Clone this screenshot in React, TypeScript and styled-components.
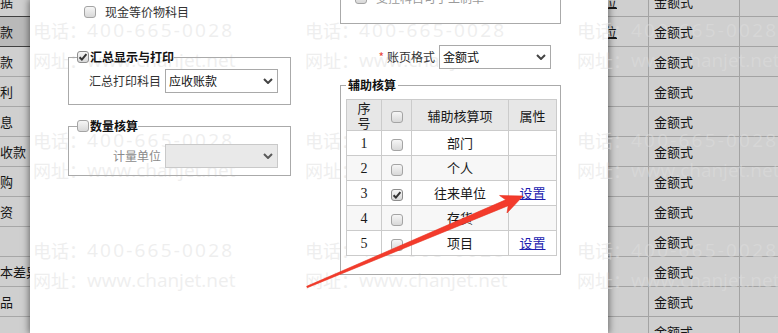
import React from "react";
import styled, { createGlobalStyle } from "styled-components";

const GlobalStyle = createGlobalStyle`
  html, body { margin: 0; padding: 0; background: #cfcfcf; }
  body { width: 778px; height: 333px; overflow: hidden; font-family: "Noto Sans CJK SC", sans-serif; }
  * { box-sizing: border-box; }
`;

const Page = styled.div`
  position: relative;
  display: flex;
  width: 778px;
  height: 333px;
  overflow: hidden;
  background: #cfcfcf;
`;

/* ---------- background grid (behind the modal) ---------- */
const BgColumn = styled.div<{ $width: number }>`
  flex: none;
  width: ${(p) => p.$width}px;
  margin-top: -13px;
  display: flex;
  flex-direction: column;
`;

const StripCell = styled.div<{ $active?: boolean; $edge?: boolean }>`
  height: 30px;
  flex: none;
  display: flex;
  align-items: center;
  overflow: hidden;
  white-space: nowrap;
  background: ${(p) => (p.$active ? "#b9b9b9" : "#cfcfcf")};
  border-bottom: 1px solid ${(p) => (p.$active || p.$edge ? "#404040" : "#a7a7a7")};
  font-size: 13px;
  color: #151515;
`;

const CellText = styled.span<{ $link?: boolean }>`
  position: relative;
  z-index: 2;
  text-decoration: ${(p) => (p.$link ? "underline" : "none")};
`;

const GridRow = styled.div`
  height: 30px;
  flex: none;
  display: flex;
  border-bottom: 1px solid #a3a3a3;
  font-size: 13px;
  color: #151515;
`;

const GridCell = styled.div<{ $w?: number; $end?: boolean }>`
  flex: ${(p) => (p.$w ? `none` : `1`)};
  width: ${(p) => (p.$w ? `${p.$w}px` : "auto")};
  display: flex;
  align-items: center;
  justify-content: ${(p) => (p.$end ? "flex-end" : "flex-start")};
  padding: ${(p) => (p.$end ? "0 31px 0 0" : "0 0 0 5px")};
  overflow: hidden;
  white-space: nowrap;
  border-right: ${(p) => (p.$w ? "1px solid #a3a3a3" : "none")};
`;

/* ---------- dialog ---------- */
const Dialog = styled.div`
  position: relative;
  flex: none;
  width: 578px;
  height: 333px;
  background: #fff;
  box-shadow: 0 0 7px 1px rgba(0, 0, 0, 0.5);
`;

const DialogBody = styled.div`
  position: relative;
  z-index: 2;
  display: grid;
  grid-template-columns: 223px 221px;
  column-gap: 49px;
  align-items: start;
  padding-left: 38px;
  font-family: "Noto Sans CJK SC", sans-serif;
  font-size: 12px;
  line-height: 14px;
  color: #333;
`;

const Column = styled.div<{ $top: number }>`
  display: flex;
  flex-direction: column;
  margin-top: ${(p) => p.$top}px;
`;

const CheckLine = styled.div<{ $indent: number; $muted?: boolean }>`
  display: flex;
  align-items: center;
  gap: 9px;
  height: 14px;
  padding-left: ${(p) => p.$indent}px;
  color: ${(p) => (p.$muted ? "#9a9a9a" : "#333")};
  white-space: nowrap;
`;

const Group = styled.fieldset<{ $pad: string; $top: number }>`
  margin: ${(p) => p.$top}px 0 0 0;
  min-width: 0;
  border: 1px solid #aaaaaa;
  padding: ${(p) => p.$pad};
`;

const Legend = styled.legend<{ $pad: number }>`
  padding: 0 ${(p) => p.$pad}px;
  font-size: 12px;
  line-height: 14px;
  font-weight: bold;
  color: #111;
`;

const LegendInner = styled.span`
  display: inline-flex;
  align-items: center;
  gap: 1px;
`;

const FormRow = styled.div<{ $end?: boolean; $padRight?: number; $top?: number }>`
  display: flex;
  align-items: center;
  justify-content: ${(p) => (p.$end ? "flex-end" : "flex-start")};
  gap: 4px;
  height: 24px;
  margin-top: ${(p) => p.$top ?? 0}px;
  padding-right: ${(p) => p.$padRight ?? 0}px;
`;

const Label = styled.span<{ $w?: number; $muted?: boolean }>`
  width: ${(p) => (p.$w ? `${p.$w}px` : "auto")};
  text-align: right;
  white-space: nowrap;
  color: ${(p) => (p.$muted ? "#8a8a8a" : "#333")};
`;

const Required = styled.span`
  color: #e8463a;
  margin-right: 3px;
`;

const Select = styled.div<{ $w: number; $disabled?: boolean }>`
  width: ${(p) => p.$w}px;
  height: 24px;
  display: flex;
  align-items: center;
  justify-content: space-between;
  padding: 0 4px 0 3px;
  border: 1px solid ${(p) => (p.$disabled ? "#c9c9c9" : "#a9a9a9")};
  background: ${(p) => (p.$disabled ? "#e9e9e9" : "#fff")};
  color: #111;
  font-size: 12px;
`;

const Box = styled.span<{ $checked?: boolean }>`
  flex: none;
  width: 12px;
  height: 12px;
  display: inline-flex;
  align-items: center;
  justify-content: center;
  vertical-align: middle;
  border: 1px solid ${(p) => (p.$checked ? "#8d8d8d" : "#a4a4a4")};
  border-radius: 3px;
  background: linear-gradient(#f6f6f6, #d8d8d8);
`;

const Check = ({ checked }: { checked?: boolean }) => (
  <Box $checked={checked}>
    {checked && (
      <svg width="10" height="10" viewBox="0 0 10 10">
        <path d="M1.6 5.2 L3.9 7.6 L8.4 2.2" fill="none" stroke="#333" strokeWidth="2" />
      </svg>
    )}
  </Box>
);

const Chevron = ({ color }: { color: string }) => (
  <svg width="10" height="6" viewBox="0 0 10 6">
    <polyline points="1,1 5,5 9,1" fill="none" stroke={color} strokeWidth="2" />
  </svg>
);

/* ---------- table ---------- */
const AuxTable = styled.table`
  width: 211px;
  border-collapse: collapse;
  table-layout: fixed;
  font-family: "Liberation Serif", "Noto Sans CJK SC", serif;
  font-size: 13px;
  color: #1a1a1a;
`;

const Col = styled.col<{ $w: number }>`
  width: ${(p) => p.$w}px;
`;

const HeadRow = styled.tr`
  height: 31px;
  background: #e7e7e7;
`;

const BodyRow = styled.tr<{ $alt?: boolean }>`
  height: 25px;
  background: ${(p) => (p.$alt ? "#f7f7f7" : "#fff")};
`;

const Th = styled.th`
  border: 1px solid #cbcbcb;
  padding: 0;
  font-weight: normal;
  text-align: center;
  line-height: 15px;
  font-family: "Noto Sans CJK SC", sans-serif;
`;

const Td = styled.td<{ $num?: boolean }>`
  border: 1px solid #cbcbcb;
  padding: 0;
  text-align: center;
  line-height: 15px;
  font-size: ${(p) => (p.$num ? 14 : 13)}px;
`;

const Link = styled.a`
  color: #1b1bb0;
  text-decoration: underline;
  font-family: "Noto Sans CJK SC", sans-serif;
`;

/* ---------- overlays ---------- */
const Watermark = styled.div`
  position: absolute;
  inset: 0;
  z-index: 1;
  pointer-events: none;
  display: grid;
  grid-template-columns: repeat(3, 272px);
  grid-auto-rows: 110px;
  padding: 15px 0 0 33px;
`;

const WmBlock = styled.div`
  display: flex;
  flex-direction: column;
`;

const WmLine = styled.div`
  height: 30px;
  display: flex;
  align-items: center;
  white-space: nowrap;
  color: rgba(222, 222, 222, 0.5);
`;

const WmCjk = styled.span`
  font-family: "Noto Sans CJK SC", sans-serif;
  font-size: 18px;
`;

const WmLatin = styled.span<{ $spacing: number }>`
  font-family: "Open Sans", sans-serif;
  font-size: 19px;
  letter-spacing: ${(p) => p.$spacing}px;
`;

const ArrowLayer = styled.svg`
  position: absolute;
  left: 0;
  top: 0;
  z-index: 5;
  pointer-events: none;
`;

const leftRows = ["据", "款", "款", "利", "息", "收款", "购", "资", "", "本差异", "品", ""];
const activeIndex = 1;

const auxRows = [
  { no: "1", name: "部门", checked: false, link: false },
  { no: "2", name: "个人", checked: false, link: false },
  { no: "3", name: "往来单位", checked: true, link: true },
  { no: "4", name: "存货", checked: false, link: false },
  { no: "5", name: "项目", checked: false, link: true },
];

export default function App() {
  return (
    <>
      <GlobalStyle />
      <Page>
        <BgColumn $width={30}>
          {leftRows.map((t, i) => (
            <StripCell key={i} $active={i === activeIndex} $edge={i === activeIndex - 1}>
              <CellText>{t}</CellText>
            </StripCell>
          ))}
        </BgColumn>

        <Dialog>
          <DialogBody>
            <Column $top={5}>
              <CheckLine $indent={16}>
                <Check />
                <span>现金等价物科目</span>
              </CheckLine>

              <Group $top={31} $pad="5px 12px 11px 8px">
                <Legend $pad={0}>
                  <LegendInner>
                    <Check checked />
                    汇总显示与打印
                  </LegendInner>
                </Legend>
                <FormRow>
                  <Label $w={84}>汇总打印科目</Label>
                  <Select $w={113}>
                    <span>应收账款</span>
                    <Chevron color="#444" />
                  </Select>
                </FormRow>
              </Group>

              <Group $top={14} $pad="10px 12px 7px 8px">
                <Legend $pad={0}>
                  <LegendInner>
                    <Check />
                    数量核算
                  </LegendInner>
                </Legend>
                <FormRow>
                  <Label $w={84} $muted>
                    计量单位
                  </Label>
                  <Select $w={113} $disabled>
                    <span />
                    <Chevron color="#5a5a5a" />
                  </Select>
                </FormRow>
              </Group>
            </Column>

            <Column $top={-40}>
              <Group $top={0} $pad="30px 10px 18px 14px">
                <CheckLine $indent={0} $muted>
                  <Check />
                  <span>受控科目可手工制单</span>
                </CheckLine>
              </Group>

              <FormRow $end $padRight={10} $top={21}>
                <Label>
                  <Required>*</Required>账页格式
                </Label>
                <Select $w={112}>
                  <span>金额式</span>
                  <Chevron color="#444" />
                </Select>
              </FormRow>

              <Group $top={9} $pad="7px 2px 18px 5px">
                <Legend $pad={2}>辅助核算</Legend>
                <AuxTable>
                  <colgroup>
                    <Col $w={35} />
                    <Col $w={30} />
                    <Col $w={97} />
                    <Col $w={48} />
                  </colgroup>
                  <thead>
                    <HeadRow>
                      <Th>
                        序<br />号
                      </Th>
                      <Th>
                        <Check />
                      </Th>
                      <Th>辅助核算项</Th>
                      <Th>属性</Th>
                    </HeadRow>
                  </thead>
                  <tbody>
                    {auxRows.map((r, i) => (
                      <BodyRow key={r.no} $alt={i % 2 === 1}>
                        <Td $num>{r.no}</Td>
                        <Td>
                          <Check checked={r.checked} />
                        </Td>
                        <Td>{r.name}</Td>
                        <Td>{r.link && <Link>设置</Link>}</Td>
                      </BodyRow>
                    ))}
                  </tbody>
                </AuxTable>
              </Group>
            </Column>
          </DialogBody>
        </Dialog>

        <BgColumn $width={170}>
          {Array.from({ length: 12 }).map((_, i) => (
            <GridRow key={i}>
              <GridCell $w={41} $end>
                {i < 2 && <CellText $link>往来单位</CellText>}
              </GridCell>
              <GridCell $w={91}>
                <CellText>金额式</CellText>
              </GridCell>
              <GridCell />
            </GridRow>
          ))}
        </BgColumn>

        <Watermark>
          {Array.from({ length: 9 }).map((_, i) => (
            <WmBlock key={i}>
              <WmLine>
                <WmCjk>电话：</WmCjk>
                <WmLatin $spacing={2.2}>400-665-0028</WmLatin>
              </WmLine>
              <WmLine>
                <WmCjk>网址：</WmCjk>
                <WmLatin $spacing={0}>www.chanjet.net</WmLatin>
              </WmLine>
            </WmBlock>
          ))}
        </Watermark>

        <ArrowLayer width="778" height="333" viewBox="0 0 778 333">
          <polygon
            points="307.3,287.7 508.2,205.7 507.0,213.0 523,196 499.6,195.5 505.7,199.8 306.7,286.3"
            fill="#f33b2c"
            stroke="#e8301f"
            strokeWidth="0.6"
            strokeLinejoin="round"
          />
        </ArrowLayer>
      </Page>
    </>
  );
}
